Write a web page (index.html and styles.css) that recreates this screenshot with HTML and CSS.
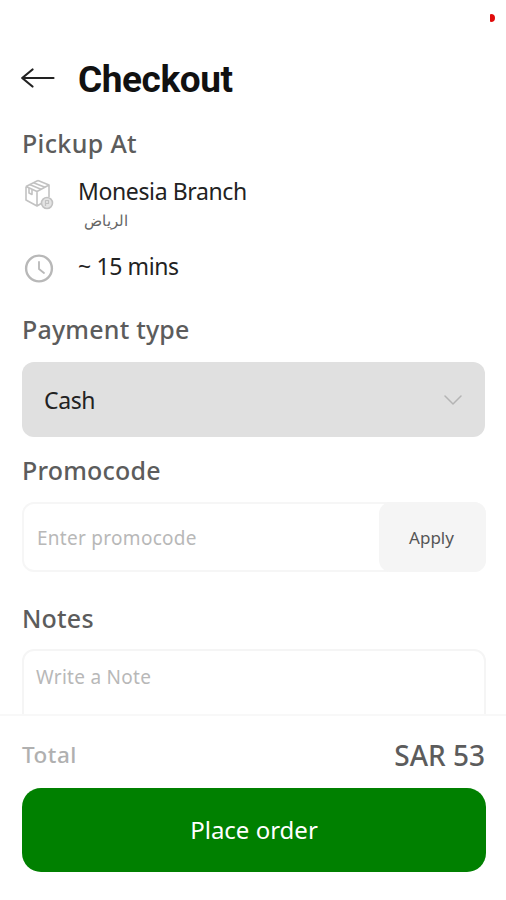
FILE: index.html
```html
<!DOCTYPE html>
<html lang="en">
<head>
<meta charset="utf-8">
<title>Checkout</title>
<link rel="stylesheet" href="styles.css">
</head>
<body>
<div class="app">
  <span class="indicator"></span>
  <main class="content">
    <header class="header">
      <svg class="back" width="34" height="22" viewBox="0 0 34 22" fill="none" stroke="#222" stroke-width="2.2" stroke-linecap="round" stroke-linejoin="round"><path d="M32.500 11H1.200M11.500 2.500L1.200 11L11.500 19.500"/></svg>
      <h1 class="title">Checkout</h1>
    </header>
    <h2 class="heading pickup">Pickup At</h2>
    <div class="row branch">
      <svg class="icon" width="30" height="31" viewBox="0 0 30 31" fill="none" stroke="#c2c2c2" stroke-width="1.6" stroke-linejoin="round"><path d="M14 1.500L25 6V18M2 7.500L14 1.500M2 7.500L13 12.500L25 6M2 7.500V21L13 27V12.500M13 27L18 24"/><path d="M5.500 5.600L17 10.300M9.500 3.700L21 8.300M5 9V14L8 15.500V10.500"/><circle cx="23" cy="24" r="5.500" fill="#e4e4e4"/><path d="M21.500 27V21.500H24.500V24.500H21.500" stroke-width="1.200"/></svg>
      <div class="place">
        <p class="text">Monesia Branch</p>
        <p class="city" lang="ar" dir="rtl">الرياض</p>
      </div>
    </div>
    <div class="row time">
      <svg class="icon" width="30" height="30" viewBox="0 0 30 30" fill="none" stroke="#b8b8b8" stroke-linecap="round" stroke-linejoin="round"><circle cx="15" cy="15.500" r="12.900" stroke-width="2.400"/><path d="M15 9V16L20 20" stroke-width="1.800"/></svg>
      <p class="text">~ 15 mins</p>
    </div>
    <h2 class="heading payment">Payment type</h2>
    <div class="select">
      <span>Cash</span>
      <svg width="18" height="10" viewBox="0 0 18 10" fill="none" stroke="#b4b4b4" stroke-width="1.500" stroke-linecap="round" stroke-linejoin="round"><path d="M1 1L9 9L17 1"/></svg>
    </div>
    <h2 class="heading promo-title">Promocode</h2>
    <div class="promo">
      <span class="placeholder enter">Enter promocode</span>
      <button class="apply">Apply</button>
    </div>
    <h2 class="heading notes-title">Notes</h2>
    <div class="notes"><span class="placeholder">Write a Note</span></div>
  </main>
  <footer class="footer">
    <div class="summary"><span class="total">Total</span><span class="amount">SAR 53</span></div>
    <button class="order">Place order</button>
  </footer>
</div>
</body>
</html>
```
FILE: styles.css
```css
* { box-sizing: border-box; }
body { margin: 0; background: #fff; font-family: "Noto Sans", sans-serif; color: #222; }
h1, h2, p { margin: 0; }
button { border: 0; padding: 0; font-family: inherit; }
.app { position: relative; display: flex; flex-direction: column; width: 506px; height: 900px; overflow: hidden; }
.indicator { position: absolute; left: 490px; top: 14px; width: 5px; height: 8px; background: #e00b0b; border-radius: 1px 4px 4px 1px; }
.content { height: 714px; padding: 59px 20px 0 22px; overflow: hidden; }
.header { display: flex; align-items: center; height: 40px; }
.back { width: 34px; margin-left: -1px; margin-right: 23px; margin-top: -2px; }
.title { padding-top: 1px; font: 700 37px/40px Roboto, sans-serif; letter-spacing: -0.45px; color: #111; }
.heading { font-size: 25px; line-height: 36px; font-weight: 500; letter-spacing: 0.2px; color: #5c5c5c; white-space: nowrap; }
.pickup { margin-top: 26px; letter-spacing: 0.35px; }
.row { display: flex; }
.icon { flex: none; margin-left: 2px; margin-right: 24px; }
.text { font-size: 23px; line-height: 34px; letter-spacing: -0.38px; white-space: nowrap; }
.branch { margin-top: 13px; height: 64px; }
.branch .icon { margin-top: 5px; }
.city { width: 50px; font-size: 15px; line-height: 24px; color: #666; }
.time { margin-top: 11px; height: 34px; }
.time .icon { margin-top: 4px; }
.payment { margin-top: 28px; }
.select { display: flex; justify-content: space-between; align-items: center; width: 463px; height: 75px; margin-top: 15px; padding: 0 23px 0 22px; border-radius: 12px; background: #e0e0e0; font-size: 23px; line-height: 34px; letter-spacing: -0.4px; }
.promo-title { margin-top: 15px; }
.promo { display: flex; align-items: center; justify-content: space-between; height: 70px; margin-top: 14px; padding-left: 13px; border: 2px solid #f6f6f6; border-radius: 12px; }
.placeholder { font-size: 19px; line-height: 28px; letter-spacing: 0.28px; color: #b8b8b8; }
.enter { padding-top: 2px; }
.apply { align-self: stretch; width: 107px; margin: -2px; padding-right: 2px; background: #f5f5f5; border-radius: 12px; font-size: 17px; color: #555; }
.notes-title { margin-top: 28px; }
.notes { height: 120px; margin-top: 13px; padding: 12px; border: 2px solid #f5f5f5; border-radius: 12px; }
.footer { height: 186px; padding: 20px 20px 0 22px; border-top: 2px solid #f8f8f8; background: #fff; }
.summary { display: flex; justify-content: space-between; height: 38px; line-height: 38px; color: #5c5c5c; }
.total { font-size: 22.5px; font-weight: 500; letter-spacing: 0.5px; color: #b0b0b0; }
.amount { margin-right: 1px; font-size: 28px; font-weight: 500; }
.order { display: block; width: 464px; height: 84px; margin-top: 14px; padding-bottom: 2px; border-radius: 19px; background: #008000; color: #fff; font-size: 24px; }
```
